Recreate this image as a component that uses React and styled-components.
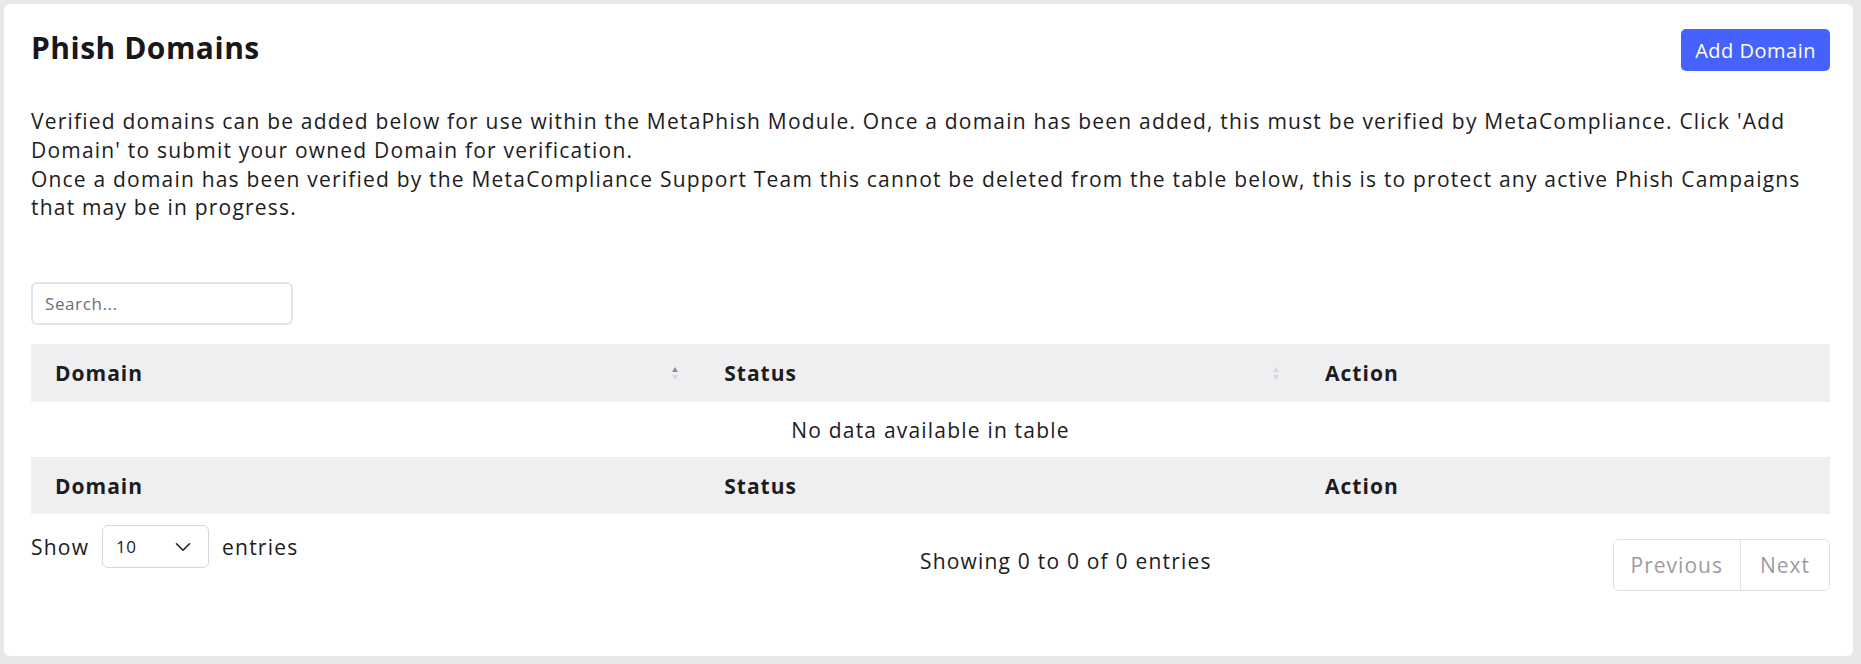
import styled, { createGlobalStyle } from 'styled-components'
import { ChevronDown } from 'lucide-react'

const GlobalStyle = createGlobalStyle`
  html, body {
    margin: 0;
    padding: 0;
    background: #e8e8eb;
  }
  body {
    font-family: "Open Sans", "Noto Sans", sans-serif;
    font-size: 21px;
    letter-spacing: 1.2px;
    color: #1c1c21;
  }
  * {
    box-sizing: border-box;
  }
`

const Page = styled.div`
  padding: 4px 8px 8px 4px;
`

const Card = styled.div`
  background: #ffffff;
  border-radius: 6px;
  padding: 25px 23px 65px 27px;
`

const Header = styled.div`
  display: flex;
  justify-content: space-between;
  align-items: center;
`

const Title = styled.h2`
  margin: 0 0 4px;
  font-size: 30px;
  line-height: 34px;
  font-weight: 700;
  letter-spacing: 0.5px;
  color: #17171c;
`

const PrimaryButton = styled.button`
  height: 42px;
  padding: 0 14px;
  border: none;
  border-radius: 5px;
  background: #4662fd;
  color: #ffffff;
  font-family: inherit;
  font-size: 20px;
  letter-spacing: 0.5px;
  font-weight: 500;
  cursor: pointer;
`

const Intro = styled.p`
  margin: 36px 0 0;
  line-height: 28.8px;
`

const SearchInput = styled.input`
  display: block;
  margin-top: 60px;
  width: 262px;
  height: 43px;
  padding: 0 12px;
  border: 2px solid #e1e4e8;
  border-radius: 6px;
  font-family: inherit;
  font-size: 17px;
  letter-spacing: 0.6px;
  color: #333;
  &::placeholder {
    color: #6b6f76;
  }
`

const Table = styled.table`
  width: 100%;
  margin-top: 19px;
  border-collapse: collapse;
`

const HeadCell = styled.th`
  width: ${p => p.$width || 'auto'};
  height: ${p => p.$height}px;
  padding: 0 20px 0 24px;
  background: #efeff2;
  text-align: left;
  font-weight: 700;
  letter-spacing: 1px;
  color: #1c1c21;
`

const HeadInner = styled.div`
  display: flex;
  justify-content: space-between;
  align-items: center;
`

const SortIcon = styled.span`
  display: flex;
  flex-direction: column;
  gap: 3px;
  margin-right: 2px;
`

const Arrow = styled.span`
  width: 0;
  height: 0;
  border-left: 3px solid transparent;
  border-right: 3px solid transparent;
  ${p => (p.$down ? 'border-top' : 'border-bottom')}: 5px solid ${p => (p.$active ? '#8d8d92' : '#d6d6da')};
`

const EmptyCell = styled.td`
  height: 55px;
  text-align: center;
  font-weight: 400;
`

const Footer = styled.div`
  display: grid;
  grid-template-columns: 488px 1fr auto;
  align-items: start;
  margin-top: 11px;
`

const Length = styled.label`
  display: flex;
  align-items: center;
  gap: 13px;
`

const SelectBox = styled.div`
  display: flex;
  align-items: center;
  justify-content: space-between;
  width: 107px;
  height: 43px;
  padding: 0 12px 0 13px;
  border: 1px solid #d4d7dc;
  border-radius: 6px;
  font-size: 17px;
  letter-spacing: 0.5px;
  color: #222;
`

const Info = styled.div`
  padding-top: 22px;
  text-align: center;
  line-height: 28.8px;
`

const Pager = styled.div`
  display: flex;
  margin-top: 14px;
  border: 1px solid #dfe2e7;
  border-radius: 6px;
  overflow: hidden;
`

const PageButton = styled.button`
  height: 50px;
  padding: 0 ${p => p.$pad}px;
  border: none;
  border-left: ${p => (p.$first ? 'none' : '1px solid #dfe2e7')};
  background: #ffffff;
  color: #9c9ca1;
  font-family: inherit;
  font-size: 21px;
  letter-spacing: 1px;
  font-weight: 500;
`

function Sort({ active }) {
  return (
    <SortIcon>
      <Arrow $active={active} />
      <Arrow $down />
    </SortIcon>
  )
}

export default function App() {
  return (
    <Page>
      <GlobalStyle />
      <Card>
        <Header>
          <Title>Phish Domains</Title>
          <PrimaryButton>Add Domain</PrimaryButton>
        </Header>
        <Intro>
          Verified domains can be added below for use within the MetaPhish Module. Once a domain has been added, this must be verified by MetaCompliance. Click 'Add Domain' to submit your owned Domain for verification.
          <br />
          Once a domain has been verified by the MetaCompliance Support Team this cannot be deleted from the table below, this is to protect any active Phish Campaigns that may be in progress.
        </Intro>
        <SearchInput placeholder="Search..." />
        <Table>
          <thead>
            <tr>
              <HeadCell $width="37.2%" $height={58}>
                <HeadInner>
                  <span>Domain</span>
                  <Sort active />
                </HeadInner>
              </HeadCell>
              <HeadCell $width="33.4%" $height={58}>
                <HeadInner>
                  <span>Status</span>
                  <Sort />
                </HeadInner>
              </HeadCell>
              <HeadCell $height={58}>Action</HeadCell>
            </tr>
          </thead>
          <tbody>
            <tr>
              <EmptyCell colSpan={3}>No data available in table</EmptyCell>
            </tr>
          </tbody>
          <tfoot>
            <tr>
              <HeadCell $height={57}>Domain</HeadCell>
              <HeadCell $height={57}>Status</HeadCell>
              <HeadCell $height={57}>Action</HeadCell>
            </tr>
          </tfoot>
        </Table>
        <Footer>
          <Length>
            Show
            <SelectBox>
              <span>10</span>
              <ChevronDown size={26} strokeWidth={1.5} />
            </SelectBox>
            entries
          </Length>
          <Info>Showing 0 to 0 of 0 entries</Info>
          <Pager>
            <PageButton $first $pad={17}>Previous</PageButton>
            <PageButton $pad={19}>Next</PageButton>
          </Pager>
        </Footer>
      </Card>
    </Page>
  )
}
